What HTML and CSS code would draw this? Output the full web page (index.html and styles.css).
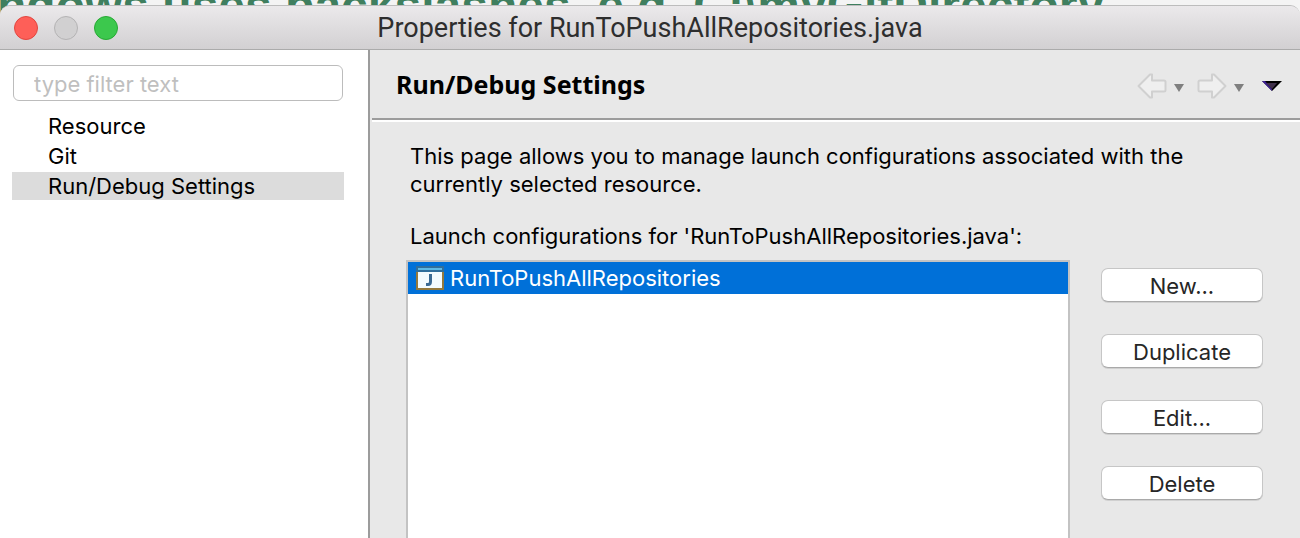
FILE: index.html
```html
<!DOCTYPE html>
<html lang="en">
<head>
<meta charset="utf-8">
<title>Properties for RunToPushAllRepositories.java</title>
<link rel="stylesheet" href="styles.css">
</head>
<body>
<p class="editor-line">ndows uses backslashes, e.g. C:\myGitDirectory</p>
<main class="window">
  <header class="titlebar">
    <div class="lights">
      <button class="light close" type="button" aria-label="Close"></button>
      <button class="light minimize" type="button" aria-label="Minimize" disabled></button>
      <button class="light expand" type="button" aria-label="Zoom"></button>
    </div>
    <h1 class="title">Properties for RunToPushAllRepositories.java</h1>
  </header>
  <div class="panes">
    <nav class="sidebar">
      <div class="search"><input class="filter" type="text" aria-label="Filter" placeholder="type filter text"></div>
      <ul class="tree">
        <li><a class="node" href="#resource">Resource</a></li>
        <li><a class="node" href="#git">Git</a></li>
        <li><a class="node selected" href="#run">Run/Debug Settings</a></li>
      </ul>
    </nav>
    <section class="page">
      <div class="page-head">
        <h2 class="page-title">Run/Debug Settings</h2>
        <div class="tools">
          <button class="tool" type="button" aria-label="Back"><svg width="30" height="26" viewBox="0 0 30 26"><path d="M1.500 13 L13 1.500 H15 V7.500 H27 Q28.500 7.500 28.500 9 V17 Q28.500 18.500 27 18.500 H15 V24.500 H13 Z" fill="#efefef" stroke="#d0d0d0" stroke-width="2" stroke-linejoin="round"/></svg></button>
          <button class="tool" type="button" aria-label="Back history"><svg width="10" height="12" viewBox="0 0 10 12"><path d="M0 4H10L5 12Z" fill="#7f7f7f"/></svg></button>
          <button class="tool next" type="button" aria-label="Forward"><svg width="30" height="26" viewBox="0 0 30 26"><path d="M28.500 13 L17 1.500 H15 V7.500 H3 Q1.500 7.500 1.500 9 V17 Q1.500 18.500 3 18.500 H15 V24.500 H17 Z" fill="#efefef" stroke="#d0d0d0" stroke-width="2" stroke-linejoin="round"/></svg></button>
          <button class="tool" type="button" aria-label="Forward history"><svg width="10" height="12" viewBox="0 0 10 12"><path d="M0 4H10L5 12Z" fill="#7f7f7f"/></svg></button>
          <button class="tool menu" type="button" aria-label="View menu"><svg width="20" height="10" viewBox="0 0 20 10"><path d="M0 0H20L10 10Z" fill="#000"/><path d="M0 0H3L10 8V10Z" fill="#3c1d96"/><path d="M4 2H15L10 8Z" fill="#40304a"/></svg></button>
        </div>
      </div>
      <div class="page-body">
        <p class="intro">This page allows you to manage launch configurations associated with the currently selected resource.</p>
        <p class="label" id="configs">Launch configurations for 'RunToPushAllRepositories.java':</p>
        <div class="work">
          <ul class="list" aria-labelledby="configs">
            <li class="row"><svg width="28" height="24" viewBox="0 0 28 24"><path d="M0 0H28V24H0Z" fill="#94793c"/><path d="M0 0H28V6H0Z" fill="#2f6e9c"/><path d="M2 2H26V4H2Z" fill="#5cb8e4"/><path d="M2 6H26V22H2Z" fill="#f3fbff"/><path d="M14.500 8V15.500Q14.500 18.500 12 18.500H10" fill="none" stroke="#3a6a94" stroke-width="3"/></svg><span>RunToPushAllRepositories</span></li>
          </ul>
          <div class="actions">
            <button class="action" type="button">New...</button>
            <button class="action" type="button">Duplicate</button>
            <button class="action" type="button">Edit...</button>
            <button class="action" type="button">Delete</button>
          </div>
        </div>
      </div>
    </section>
  </div>
</main>
</body>
</html>
```
FILE: styles.css
```css
* { box-sizing: border-box; }
html, body { height: 100%; }
body {
  margin: 0;
  padding-top: 5px;
  overflow: hidden;
  background: #f4f4f4;
  color: #000;
  font: 22px/28px Inter, "Liberation Sans", sans-serif;
}
h1, h2, p, ul { margin: 0; padding: 0; }
ul { list-style: none; }
button { padding: 0; border: 0; background: none; font: inherit; color: inherit; }
a { color: inherit; text-decoration: none; }
svg { display: block; }
.editor-line {
  position: absolute;
  top: -14px;
  left: -3px;
  white-space: nowrap;
  font: bold 48px/40px "Liberation Sans", sans-serif;
  color: #3f7f5f;
}
.window {
  position: relative;
  display: flex;
  flex-direction: column;
  height: 100%;
  border-top: 1px solid #bdbdbd;
  border-radius: 10px 10px 0 0;
  background: #e8e8e8;
  overflow: hidden;
}
.titlebar {
  display: grid;
  grid-template-columns: 1fr auto 1fr;
  align-items: center;
  height: 44px;
  padding: 0 14px;
  border-bottom: 1px solid #ababab;
  background: linear-gradient(#ebe9eb, #d2d0d2);
}
.lights { display: flex; gap: 16px; }
.light { width: 24px; height: 24px; border: 1px solid; border-radius: 50%; }
.close { background: #fe5f58; border-color: #e2463f; }
.minimize { background: #d1d0d1; border-color: #b4b3b4; }
.expand { background: #3cc84d; border-color: #27a934; }
.title { font: 27px/28px Roboto, sans-serif; color: #2e2e2e; }
.panes { display: flex; flex: 1; min-height: 0; }
.sidebar {
  width: 372px;
  flex: none;
  padding: 15px 26px 0 12px;
  border-right: 2px solid #e8e8e8;
  box-shadow: inset -2px 0 #9c9c9c;
  background: #fff;
}
.search { padding: 0 1px; }
.filter {
  display: block;
  width: 100%;
  height: 36px;
  padding: 2px 20px 0;
  border: 1px solid #bcbcbc;
  border-radius: 6px;
  font: inherit;
}
.filter::placeholder { color: #bfbfbf; opacity: 1; }
.tree { display: flex; flex-direction: column; gap: 2px; padding-top: 11px; }
.node { display: block; padding-left: 36px; }
.selected { background: #dcdcdc; }
.page { display: flex; flex-direction: column; flex: 1; min-width: 0; }
.page-head {
  display: flex;
  align-items: center;
  justify-content: space-between;
  height: 72px;
  padding: 0 18px 0 24px;
  border-bottom: 2px solid #fff;
  box-shadow: inset 0 -2px #9c9c9c;
}
.page-title { padding-bottom: 2px; font: bold 25px/28px "Noto Sans", sans-serif; }
.tools { display: flex; align-items: center; gap: 7px; padding-top: 2px; }
.next { margin-left: 6px; }
.menu { margin-left: 11px; }
.page-body { display: flex; flex-direction: column; flex: 1; min-height: 0; padding: 20px 37px 0 34px; }
.intro { padding: 0 60px 0 4px; }
.label { padding: 24px 0 0 4px; }
.work { display: flex; flex: 1; gap: 31px; margin-top: 10px; }
.list { flex: 1; border: 2px solid #c3c3c3; border-bottom: 0; background: #fff; }
.row { display: flex; align-items: center; gap: 6px; height: 32px; padding: 0 8px; background: #0070d8; color: #fff; }
.actions { display: flex; flex-direction: column; gap: 32px; width: 162px; padding-top: 8px; }
.action {
  height: 34px;
  padding-top: 2px;
  border: 1px solid #c6c6c6;
  border-bottom-color: #a9a9a9;
  border-radius: 7px;
  box-shadow: 0 1px #d0d0d0;
  background: #fff;
  color: #262626;
}
```
